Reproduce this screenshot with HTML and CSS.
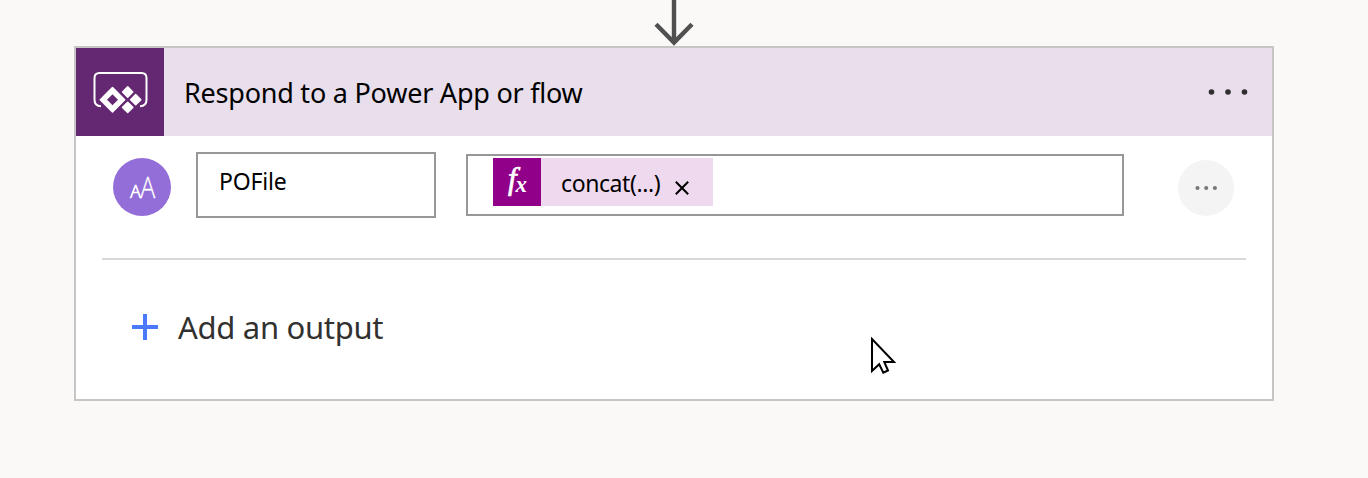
FILE: index.html
```html
<!DOCTYPE html>
<html lang="en">
<head>
<meta charset="utf-8">
<title>Flow</title>
<link rel="stylesheet" href="styles.css">
</head>
<body>
<div class="connector">
  <svg width="40" height="46" viewBox="0 0 40 46" fill="none" stroke="#505050" stroke-width="4"><path d="M20 0V42M2 24.300L20 42.500L38 24.300" stroke-width="4.400"/></svg>
</div>
<main class="card">
  <header class="card-head">
    <div class="brand">
      <svg width="88" height="88" viewBox="0 0 88 88">
        <path d="M25 58.200Q18.500 58.200 18.500 51.500V30Q18.500 25 23.500 25H65.500Q70.500 25 70.500 30V51.500Q70.500 58.200 64 58.200" fill="none" stroke="#fff" stroke-width="2"/>
        <g fill="#fff" stroke="#fff" stroke-width="1.500" stroke-linejoin="round">
          <path fill-rule="evenodd" d="M36.500 39.500L48.700 51.700L36.500 63.900L24.300 51.700ZM36.500 45.200L30 51.700L36.500 58.200L43 51.700Z"/>
          <path d="M51.700 38.900L56.800 44L51.700 49.100L46.600 44ZM59.700 46.600L64.800 51.700L59.700 56.800L54.600 51.700ZM51.700 54.300L56.800 59.400L51.700 64.500L46.600 59.400Z"/>
        </g>
      </svg>
    </div>
    <h1 class="title">Respond to a Power App or flow</h1>
    <svg class="menu" width="42" height="8" viewBox="0 0 42 8" fill="#2f2d2e"><circle cx="4.500" cy="4" r="2.800"/><circle cx="21" cy="4" r="2.800"/><circle cx="37.500" cy="4" r="2.800"/></svg>
  </header>
  <section class="row">
    <div class="type">
      <svg width="58" height="58" viewBox="0 0 58 58">
        <text class="glyph glyph-small" x="17.200" y="40" font-size="18" textLength="10.500" lengthAdjust="spacingAndGlyphs">A</text>
        <text class="glyph" x="27.200" y="40" font-size="30" textLength="15" lengthAdjust="spacingAndGlyphs">A</text>
      </svg>
    </div>
    <div class="name">POFile</div>
    <div class="value">
      <div class="token">
        <svg class="fx" width="48" height="48" viewBox="0 0 48 48"><text class="fx-f" x="15" y="31" font-size="31">f</text><text x="22.500" y="34" font-size="23">x</text></svg>
        <span class="expr">concat(...)</span>
        <svg width="14" height="14" viewBox="0 0 14 14" fill="none" stroke="#000" stroke-width="2"><path d="M.8.800L13.200 13.200M13.200.800L.8 13.200"/></svg>
      </div>
    </div>
    <div class="more">
      <svg width="24" height="6" viewBox="0 0 24 6" fill="#777"><circle cx="3.500" cy="3" r="2.050"/><circle cx="12.200" cy="3" r="2.050"/><circle cx="20.900" cy="3" r="2.050"/></svg>
    </div>
  </section>
  <div class="add">
    <svg width="26" height="26" viewBox="0 0 26 26" stroke="#4a78ff" stroke-width="4"><path d="M13 0V26M0 13H26"/></svg>
    <span class="add-label">Add an output</span>
  </div>
</main>
<svg class="pointer" width="28" height="40" viewBox="0 0 28 40"><path d="M2 2V34L9.200 27.200L13.300 35.600L18 33.500L14.300 25H24Z" fill="#fff" stroke="#000" stroke-width="2"/></svg>
</body>
</html>
```
FILE: styles.css
```css
* { box-sizing: border-box; }
body {
  margin: 0;
  height: 478px;
  overflow: hidden;
  background: #faf9f8;
  color: #000;
  font-family: "Noto Sans", sans-serif;
}
svg { display: block; flex: none; }
.connector { height: 46px; padding-left: 654px; }
.card {
  width: 1200px;
  height: 355px;
  margin-left: 74px;
  border: 2px solid #c8c6c4;
  background: #fff;
}
.card-head {
  display: flex;
  align-items: center;
  height: 88px;
  padding-right: 23px;
  background: #e9deeb;
}
.brand { width: 88px; height: 88px; background: #642873; }
.title {
  flex: 1;
  margin: 0 0 0 20px;
  padding-top: 2px;
  font-size: 27px;
  font-weight: 400;
  line-height: 36px;
  letter-spacing: -0.23px;
  white-space: nowrap;
}
.row {
  display: flex;
  align-items: flex-start;
  height: 124px;
  margin: 0 26px;
  padding-top: 16px;
  border-bottom: 2px solid #d8d8d8;
}
.type {
  width: 58px;
  height: 58px;
  margin: 6px 25px 0 11px;
  border-radius: 50%;
  background: #936dd8;
}
.glyph {
  font-family: "Open Sans", sans-serif;
  font-weight: 300;
  fill: #fff;
  stroke: #fff;
  stroke-width: 0.3px;
}
.glyph-small { stroke-width: 0.7px; }
.name {
  width: 240px;
  height: 66px;
  padding: 11px 21px;
  border: 2px solid #979797;
  font-size: 23px;
  line-height: 32px;
  letter-spacing: -0.2px;
}
.value {
  width: 658px;
  height: 62px;
  margin: 2px 54px 0 30px;
  padding: 2px 25px;
  border: 2px solid #979797;
}
.token {
  display: flex;
  align-items: center;
  width: 220px;
  height: 48px;
  background: #efd9ee;
}
.fx {
  background: #910089;
  fill: #fff;
  font-family: "Liberation Serif", serif;
  font-style: italic;
  font-weight: 700;
}
.fx-f { font-weight: 400; stroke: #fff; stroke-width: 0.7px; }
.expr {
  width: 114px;
  margin-right: 20px;
  padding: 2px 0 0 20px;
  font-size: 23px;
  line-height: 32px;
  letter-spacing: -0.4px;
  white-space: nowrap;
}
.token svg:last-child { margin-top: 11px; }
.more {
  display: flex;
  align-items: center;
  justify-content: center;
  width: 56px;
  height: 56px;
  margin-top: 8px;
  border-radius: 50%;
  background: #f4f4f4;
}
.add { display: flex; align-items: center; gap: 20px; padding: 46px 0 0 56px; }
.add-label {
  font-size: 31px;
  line-height: 42px;
  letter-spacing: -0.3px;
  color: #323130;
  white-space: nowrap;
}
.pointer { position: absolute; left: 870px; top: 337px; }
```
